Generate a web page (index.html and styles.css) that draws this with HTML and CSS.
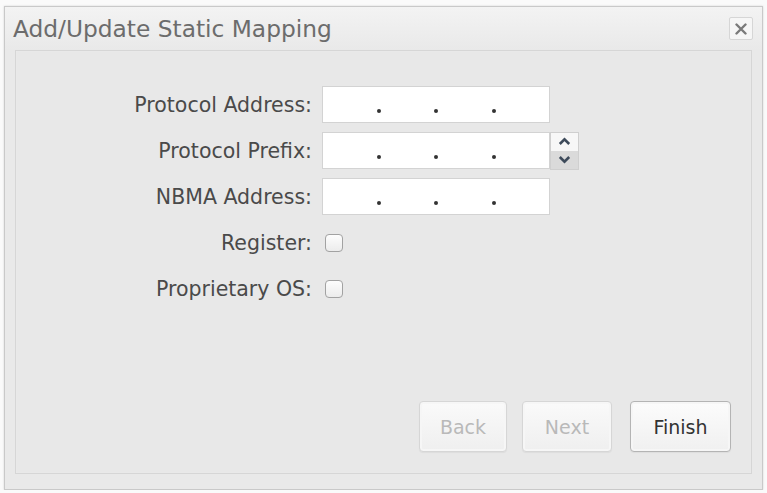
FILE: index.html
```html
<!DOCTYPE html>
<html>
<head>
<meta charset="utf-8">
<title>Add/Update Static Mapping</title>
<link rel="stylesheet" href="styles.css">
</head>
<body>
<div class="dialog">
  <div class="titlebar">
    <span class="title">Add/Update Static Mapping</span>
    <button class="close" aria-label="Close">
      <svg width="12" height="12" viewBox="0 0 12 12"><path d="M1.5 1.5 L10.5 10.5 M10.5 1.5 L1.5 10.5" stroke="#7a7a7a" stroke-width="2.4" stroke-linecap="round"/></svg>
    </button>
  </div>
  <div class="panel">
    <div class="form">
      <label class="lbl">Protocol Address:</label>
      <div class="field">
        <div class="ip"><span class="seg"></span><span class="dot"></span><span class="seg"></span><span class="dot"></span><span class="seg"></span><span class="dot"></span><span class="seg"></span></div>
      </div>

      <label class="lbl">Protocol Prefix:</label>
      <div class="field">
        <div class="ip"><span class="seg"></span><span class="dot"></span><span class="seg"></span><span class="dot"></span><span class="seg"></span><span class="dot"></span><span class="seg"></span></div>
        <div class="spin">
          <span class="up"><svg width="13" height="9" viewBox="0 0 13 9"><path d="M1.8 7 L6.5 2.3 L11.2 7" fill="none" stroke="#3d4a5a" stroke-width="2.6"/></svg></span>
          <span class="down"><svg width="13" height="9" viewBox="0 0 13 9"><path d="M1.8 2 L6.5 6.7 L11.2 2" fill="none" stroke="#3d4a5a" stroke-width="2.6"/></svg></span>
        </div>
      </div>

      <label class="lbl">NBMA Address:</label>
      <div class="field">
        <div class="ip"><span class="seg"></span><span class="dot"></span><span class="seg"></span><span class="dot"></span><span class="seg"></span><span class="dot"></span><span class="seg"></span></div>
      </div>

      <label class="lbl">Register:</label>
      <div class="field"><span class="check"></span></div>

      <label class="lbl">Proprietary OS:</label>
      <div class="field"><span class="check"></span></div>
    </div>
    <div class="buttons">
      <button class="btn disabled btn-back">Back</button>
      <button class="btn disabled btn-next">Next</button>
      <button class="btn primary btn-finish">Finish</button>
    </div>
  </div>
</div>
</body>
</html>
```

FILE: styles.css
```css
html, body {
  margin: 0;
  padding: 0;
  background: #fafafa;
  font-family: "DejaVu Sans", Verdana, sans-serif;
}

.dialog {
  margin: 6px 4px 0 4px;
  width: 759px;
  height: 484px;
  box-sizing: border-box;
  border: 1px solid #c9c9c9;
  background: #e9e9e9;
  box-shadow: 0 0 2px rgba(0,0,0,0.15);
  display: flex;
  flex-direction: column;
  padding: 0 10px 15px 10px;
}

.titlebar {
  height: 43px;
  display: flex;
  align-items: center;
  justify-content: space-between;
  margin: 0 -10px;
  padding: 0 9px 0 8px;
  background: linear-gradient(#f3f3f3, #e9e9e9);
}

.title {
  font-size: 23.3px;
  color: #6c6c6c;
}

.close {
  width: 24px;
  height: 23px;
  padding: 0;
  border: 1px solid #d6d6d6;
  border-radius: 2px;
  background: #f6f6f6;
  display: flex;
  align-items: center;
  justify-content: center;
}

.panel {
  flex: 1;
  border: 1px solid #d6d6d6;
  background: #e8e8e8;
  box-shadow: inset 0 0 1px #f4f4f4;
  display: flex;
  flex-direction: column;
}

.form {
  display: grid;
  grid-template-columns: 296px auto;
  grid-auto-rows: 37px;
  column-gap: 10px;
  row-gap: 9px;
  padding-top: 35px;
}

.lbl {
  justify-self: end;
  align-self: center;
  font-size: 20.5px;
  color: #4a4a4a;
}

.field {
  display: flex;
  align-items: center;
}

.ip {
  width: 226px;
  height: 26px;
  border: 1px solid #d3d3d3;
  background: #fff;
  display: flex;
  align-items: flex-end;
  padding-bottom: 9px;
  box-sizing: content-box;
}

.seg {
  flex: 1;
}

.dot {
  width: 4px;
  height: 4px;
  border-radius: 50%;
  background: #333;
}

.spin {
  width: 27px;
  height: 36px;
  border: 1px solid #cfcfcf;
  display: flex;
  flex-direction: column;
}

.spin .up, .spin .down {
  flex: 1;
  display: flex;
  align-items: center;
  justify-content: center;
}

.spin .up {
  background: #f7f7f7;
}

.spin .down {
  background: #dadada;
}

.check {
  width: 16px;
  height: 16px;
  margin-left: 3px;
  border: 1px solid #a2a2a2;
  border-radius: 4px;
  background: linear-gradient(#fdfdfd, #ececec);
}

.buttons {
  margin-top: auto;
  display: flex;
  justify-content: flex-end;
  padding: 0 20px 21px 0;
}

.btn {
  height: 51px;
  border: 1px solid #cdcdcd;
  border-radius: 4px;
  background: linear-gradient(#fafafa, #efefef);
  box-shadow: inset 0 0 0 2px #f6f6f6, 0 1px 1px rgba(0,0,0,0.05);
  font-family: "DejaVu Sans", Verdana, sans-serif;
  font-size: 19px;
  padding: 0;
}

.btn-back { width: 88px; }
.btn-next { width: 90px; margin-left: 15px; }
.btn-finish { width: 101px; margin-left: 18px; }

.disabled {
  color: #b9b9b9;
  border-color: #d6d6d6;
}

.primary {
  color: #333;
  border-color: #b4b4b4;
  background: linear-gradient(#fcfcfc, #f0f0f0);
}
```
